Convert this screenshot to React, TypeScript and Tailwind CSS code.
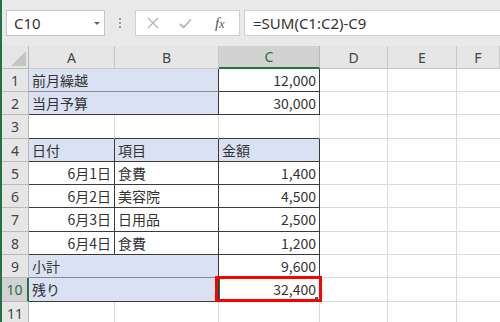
import React from "react";

type Cell = { text?: string; span?: number; fill?: boolean; right?: boolean };

const cols = ["A", "B", "C", "D", "E", "F"];
const heights = [23, 23, 24, 23, 23, 23, 24, 23, 23, 24, 23];

const rows: Cell[][] = [
  [{ text: "前月繰越", span: 2, fill: true }, { text: "12,000", right: true }],
  [{ text: "当月予算", span: 2, fill: true }, { text: "30,000", right: true }],
  [{}, {}, {}],
  [
    { text: "日付", fill: true },
    { text: "項目", fill: true },
    { text: "金額", fill: true },
  ],
  [{ text: "6月1日", right: true }, { text: "食費" }, { text: "1,400", right: true }],
  [{ text: "6月2日", right: true }, { text: "美容院" }, { text: "4,500", right: true }],
  [{ text: "6月3日", right: true }, { text: "日用品" }, { text: "2,500", right: true }],
  [{ text: "6月4日", right: true }, { text: "食費" }, { text: "1,200", right: true }],
  [{ text: "小計", span: 2, fill: true }, { text: "9,600", right: true }],
  [{ text: "残り", span: 2, fill: true }, { text: "32,400", right: true }],
  [{}, {}, {}],
];

// rows (1-based) whose A..C cells carry the black ruled border
const ruled = [1, 2, 4, 5, 6, 7, 8, 9, 10];

const jp = { fontFamily: '"Noto Sans CJK JP", "Noto Sans", sans-serif' };
const ui = { fontFamily: '"Noto Sans", "Liberation Sans", sans-serif' };

function Toolbar() {
  return (
    <div className="flex h-[46px] items-start bg-[#e9e9e9] pt-[10px] pl-[4px]" style={ui}>
      <div className="relative flex h-[26px] w-[99px] items-center border border-[#c6c6c6] bg-white pl-[7px] text-[15px] text-[#333]">
        C10
        <span className="absolute right-[4px] top-[11px] h-0 w-0 border-x-[3px] border-t-[3px] border-x-transparent border-t-[#666]" />
      </div>
      <div className="flex w-[30px] flex-col items-center gap-[2px] pt-[8px]">
        <span className="h-[2px] w-[2px] bg-[#9a9a9a]" />
        <span className="h-[2px] w-[2px] bg-[#9a9a9a]" />
        <span className="h-[2px] w-[2px] bg-[#9a9a9a]" />
      </div>
      <div className="flex h-[26px] w-[105px] items-center border border-[#d0d0d0] bg-white">
        <svg width="12" height="12" viewBox="0 0 12 12" className="ml-[11px]">
          <path d="M1 1 L11 11 M11 1 L1 11" stroke="#b5b5b5" strokeWidth="1.3" fill="none" />
        </svg>
        <svg width="13" height="11" viewBox="0 0 13 11" className="ml-[20px]">
          <path d="M1 6 L4.5 9.5 L12 1.5" stroke="#b5b5b5" strokeWidth="1.8" fill="none" />
        </svg>
        <span
          className="ml-[23px] text-[15px] italic text-[#555]"
          style={{ fontFamily: '"Liberation Serif", "DejaVu Serif", serif' }}
        >
          f<span className="text-[12px]">x</span>
        </span>
      </div>
      <div className="ml-[4px] flex h-[26px] flex-1 items-center border-y border-l border-[#d0d0d0] bg-white pl-[8px] text-[15px] text-[#333]">
        =SUM(C1:C2)-C9
      </div>
    </div>
  );
}

function rightDark(r: number, c: number) {
  const inD = (cc: number) => ruled.includes(r) && cc >= 1 && cc <= 3;
  return inD(c) || inD(c + 1);
}

function bottomDark(r: number, c: number) {
  const inD = (rr: number) => ruled.includes(rr) && c >= 1 && c <= 3;
  return inD(r) || inD(r + 1);
}

export default function App() {
  return (
    <div className="h-[322px] w-[500px] overflow-hidden border-l-2 border-[#217346] bg-white">
      <Toolbar />
      <div
        className="grid grid-cols-[27px_86px_104px_101px_68px_69px_1fr]"
        style={{ gridTemplateRows: `23px ${heights.map((h) => h + "px").join(" ")}` }}
      >
        {/* header row */}
        <div className="relative border-r border-b border-[#b8b8b8] bg-[#e6e6e6]">
          <svg width="15" height="15" className="absolute right-[2px] bottom-[2px]">
            <polygon points="15,0 15,15 0,15" fill="#c4c4c4" />
          </svg>
        </div>
        {cols.map((c) => (
          <div
            key={c}
            className={
              c === "C"
                ? "flex items-center justify-center border-r border-b-2 border-r-[#b8b8b8] border-b-[#217346] bg-[#d2d2d2] text-[14px] text-[#217346]"
                : "flex items-center justify-center border-r border-b border-[#c8c8c8] bg-[#e6e6e6] text-[14px] text-[#444]"
            }
            style={ui}
          >
            {c}
          </div>
        ))}

        {rows.map((cells, i) => {
          const r = i + 1;
          const sel = r === 10;
          let c = 1;
          return (
            <React.Fragment key={r}>
              <div
                className={
                  sel
                    ? "flex items-center justify-center border-r-2 border-b border-r-[#217346] border-b-[#b8b8b8] bg-[#d2d2d2] text-[14px] text-[#217346]"
                    : "flex items-center justify-center border-r border-b border-[#b8b8b8] bg-[#e6e6e6] text-[14px] text-[#444]"
                }
                style={ui}
              >
                {r}
              </div>
              {cells.map((cell, k) => {
                const start = c;
                const span = cell.span ?? 1;
                c += span;
                const end = start + span - 1;
                const rd = rightDark(r, end);
                const softBottom = cell.span === 2 && (r === 1 || r === 9);
                const bd = bottomDark(r, start);
                const isC10 = r === 10 && start === 3;
                return (
                  <div
                    key={k}
                    className={[
                      "relative flex items-center whitespace-nowrap border-r border-b px-[3px] text-[14px] text-[#333]",
                      span === 2 ? "col-span-2" : "",
                      cell.right ? "justify-end" : "justify-start",
                      cell.fill ? "bg-[#d9e1f2]" : "bg-white",
                      rd ? "border-r-[#3a3a3a]" : "border-r-[#dadada]",
                      softBottom ? "border-b-[#8a8a96]" : bd ? "border-b-[#3a3a3a]" : "border-b-[#dadada]",
                    ].join(" ")}
                    style={jp}
                  >
                    {cell.text}
                    {isC10 && (
                      <>
                        <span className="absolute left-0 top-0 bottom-0 w-[1px] bg-[#217346]" />
                        <span className="absolute right-[1px] bottom-[1px] h-[3px] w-[3px] bg-[#217346]" />
                        <span className="absolute -left-[4px] -right-[3px] -top-[2px] -bottom-[1px] border-[3px] border-[#ff0000]" />
                      </>
                    )}
                  </div>
                );
              })}
              <div className="border-r border-b border-[#dadada]" />
              <div className="border-r border-b border-[#dadada]" />
              <div className="border-b border-[#dadada]" />
            </React.Fragment>
          );
        })}
      </div>
    </div>
  );
}
